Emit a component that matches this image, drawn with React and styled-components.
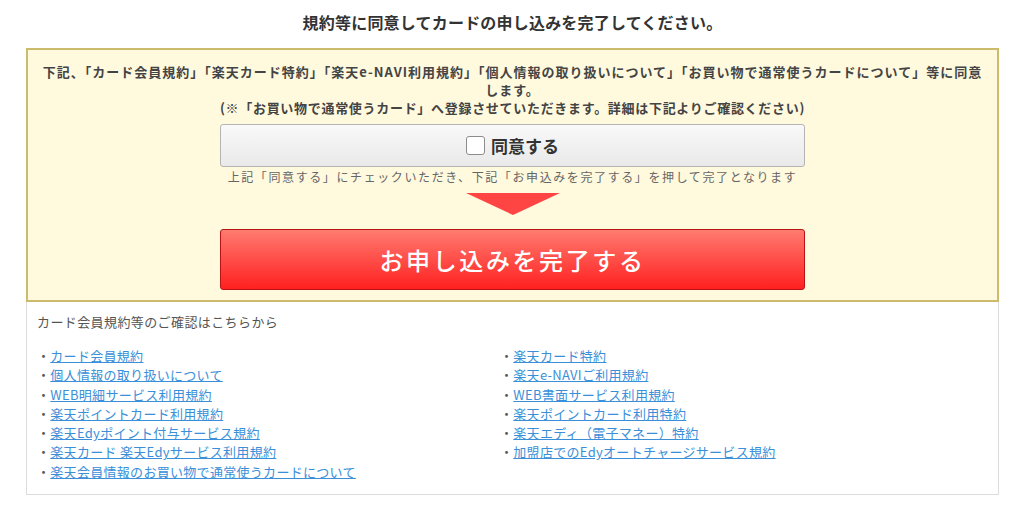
import React, { useState } from "react";
import styled, { createGlobalStyle } from "styled-components";

const GlobalStyle = createGlobalStyle`
  body {
    margin: 0;
    background: #fff;
    font-family: "Noto Sans CJK JP", "Noto Sans", "Liberation Sans", sans-serif;
    color: #333;
  }
`;

const leftLinks = [
  "カード会員規約",
  "個人情報の取り扱いについて",
  "WEB明細サービス利用規約",
  "楽天ポイントカード利用規約",
  "楽天Edyポイント付与サービス規約",
  "楽天カード 楽天Edyサービス利用規約",
  "楽天会員情報のお買い物で通常使うカードについて",
];

const rightLinks = [
  "楽天カード特約",
  "楽天e-NAVIご利用規約",
  "WEB書面サービス利用規約",
  "楽天ポイントカード利用特約",
  "楽天エディ（電子マネー）特約",
  "加盟店でのEdyオートチャージサービス規約",
];

function App() {
  const [agreed, setAgreed] = useState(false);

  return (
    <Page>
      <GlobalStyle />
      <Title>規約等に同意してカードの申し込みを完了してください。</Title>

      <AgreeBox>
        <Notice>
          下記、「カード会員規約」「楽天カード特約」「楽天e-NAVI利用規約」「個人情報の取り扱いについて」「お買い物で通常使うカードについて」等に同意
          <br />
          します。
        </Notice>
        <Notice $tight>
          (※「お買い物で通常使うカード」へ登録させていただきます。詳細は下記よりご確認ください)
        </Notice>

        <AgreeButton type="button" onClick={() => setAgreed(!agreed)}>
          <CheckBox $checked={agreed} />
          同意する
        </AgreeButton>
        <Caption>
          上記「同意する」にチェックいただき、下記「お申込みを完了する」を押して完了となります
        </Caption>
        <Arrow />
        <SubmitButton type="button">お申し込みを完了する</SubmitButton>
      </AgreeBox>

      <TermsBox>
        <TermsHeading>カード会員規約等のご確認はこちらから</TermsHeading>
        <LinkGrid>
          <LinkList>
            {leftLinks.map((t) => (
              <LinkItem key={t}>
                <a href="#">{t}</a>
              </LinkItem>
            ))}
          </LinkList>
          <LinkList>
            {rightLinks.map((t) => (
              <LinkItem key={t}>
                <a href="#">{t}</a>
              </LinkItem>
            ))}
          </LinkList>
        </LinkGrid>
      </TermsBox>
    </Page>
  );
}

export default App;

const Page = styled.div`
  padding: 10px 25px 0 26px;
`;

const Title = styled.h1`
  margin: 0 0 14px;
  font-size: 16px;
  line-height: 24px;
  font-weight: bold;
  text-align: center;
  color: #333;
  letter-spacing: 0.2px;
`;

const AgreeBox = styled.div`
  display: flex;
  flex-direction: column;
  align-items: center;
  background: #fff9de;
  border: 2px solid #cbbc6c;
  padding: 13px 10px 10px;
`;

const Notice = styled.p`
  margin: 0;
  font-size: 13px;
  line-height: 18px;
  font-weight: bold;
  color: #444;
  text-align: center;
  letter-spacing: ${(p) => (p.$tight ? "0.7px" : "1px")};
  white-space: nowrap;
`;

const AgreeButton = styled.button`
  display: flex;
  align-items: center;
  justify-content: center;
  gap: 6px;
  margin-top: 7px;
  width: 585px;
  height: 43px;
  border: 1px solid #b4b4b4;
  border-radius: 3px;
  background: linear-gradient(#f9f9f9, #e9e9e9);
  font-family: inherit;
  font-size: 17px;
  font-weight: bold;
  color: #333;
  cursor: pointer;
`;

const CheckBox = styled.span`
  display: inline-block;
  width: 17px;
  height: 17px;
  border: 1px solid #8c8c8c;
  border-radius: 3px;
  background: ${(p) => (p.$checked ? "#3b8fd6" : "#fff")};
`;

const Caption = styled.p`
  margin: 2px 0 0;
  font-size: 12px;
  line-height: 16px;
  color: #666;
  letter-spacing: 1.6px;
  white-space: nowrap;
`;

const Arrow = styled.div`
  margin-top: 8px;
  width: 0;
  height: 0;
  border-left: 47px solid transparent;
  border-right: 47px solid transparent;
  border-top: 22px solid #ff4444;
`;

const SubmitButton = styled.button`
  margin-top: 14px;
  width: 585px;
  height: 61px;
  border: 1px solid #b81414;
  border-radius: 3px;
  background: linear-gradient(#ff7b70, #ff2020);
  color: #fff;
  font-family: inherit;
  font-size: 24px;
  font-weight: 500;
  letter-spacing: 2.6px;
  cursor: pointer;
`;

const TermsBox = styled.div`
  border: 1px solid #dcdcdc;
  border-top: none;
  padding: 12px 10px 13px;
`;

const TermsHeading = styled.p`
  margin: 0;
  font-size: 13px;
  line-height: 16px;
  color: #555;
  letter-spacing: 0.4px;
`;

const LinkGrid = styled.div`
  display: grid;
  grid-template-columns: 463px 1fr;
  margin-top: 16px;
`;

const LinkList = styled.ul`
  margin: 0;
  padding: 0;
  list-style: none;
`;

const LinkItem = styled.li`
  font-size: 13px;
  line-height: 19.3px;
  color: #555;
  letter-spacing: 0.3px;

  &::before {
    content: "・";
  }

  a {
    color: #3a8fd8;
    text-decoration: underline;
  }
`;
